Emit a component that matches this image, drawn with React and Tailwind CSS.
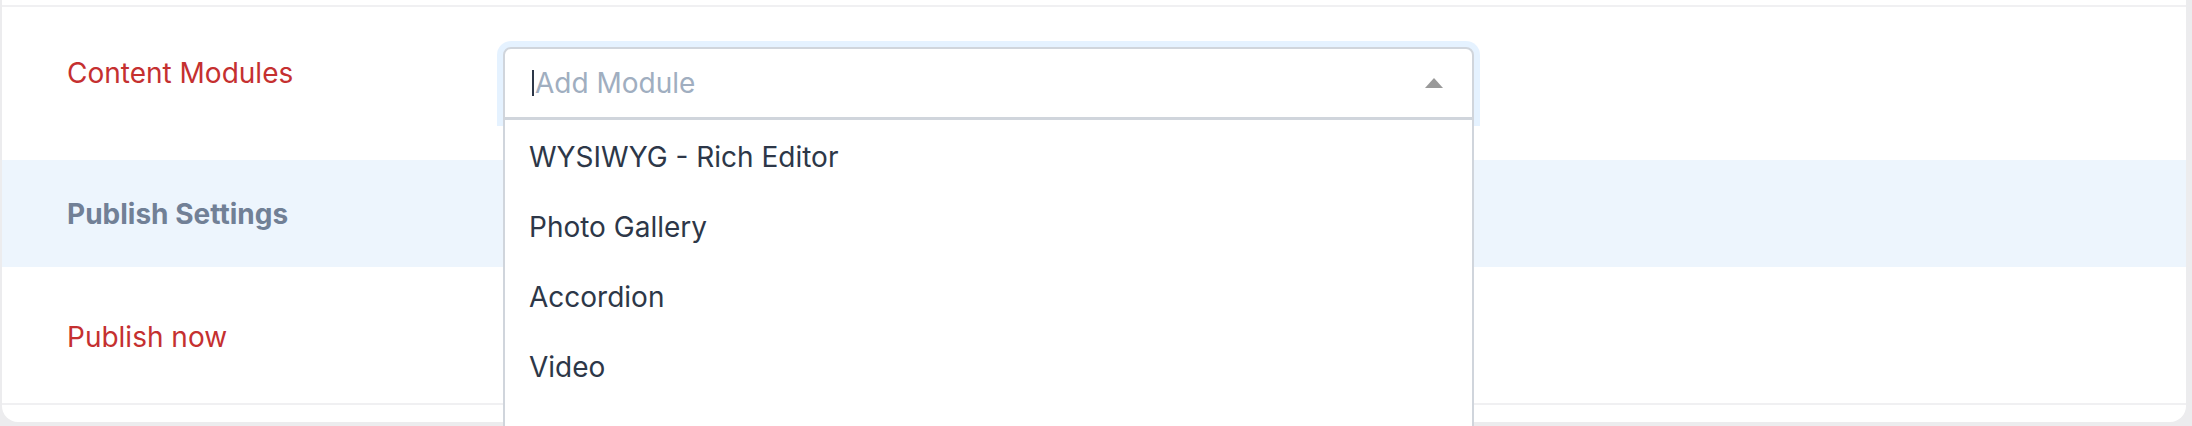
import React from 'react';

const modules = ['WYSIWYG - Rich Editor', 'Photo Gallery', 'Accordion', 'Video', 'Content Block'];

const ModuleSelect = () => (
    <div className="relative w-[971px]">
        <div className="h-[73px] flex items-center justify-between bg-white border-2 border-b-[3px] border-[#d0d5dc] rounded-t-[8px] shadow-[0_0_0_6px_rgba(0,126,255,0.1)] pl-[27px] pr-[29px]">
            <div className="flex items-center">
                <span className="w-[2px] h-[26px] bg-[#2d3748] mr-[1px]" />
                <span className="text-[28px] leading-[42px] text-[#a0aec0]">Add Module</span>
            </div>
            <span className="w-0 h-0 border-x-[9px] border-x-transparent border-b-[10px] border-b-[#999999]" />
        </div>
        <div className="absolute left-0 right-0 top-full bg-white border-x-2 border-[#d0d5dc] pt-[2px] z-10">
            {modules.map((m) => (
                <div key={m} className="h-[70px] flex items-center pl-[24px] text-[28px] text-[#2d3748]">
                    {m}
                </div>
            ))}
        </div>
    </div>
);

export default function App() {
    return (
        <div className="h-[426px] overflow-hidden bg-[#ececee] pl-[2px] pr-[6px] pb-[4px] font-['Inter','Liberation_Sans',Arial,sans-serif]">
            <div className="bg-white rounded-b-[16px] h-full flex flex-col">
                <div className="h-[5px]" />
                <div className="border-t-2 border-[#f0f0f2]" />

                <div className="flex px-[65px] pt-[40px] pb-[40px]">
                    <div className="w-[436px] pt-[5px] text-[28px] leading-[42px] text-[#c53030]">Content Modules</div>
                    <ModuleSelect />
                </div>

                <div className="h-[107px] bg-[#edf5fd] flex items-center px-[65px]">
                    <span className="text-[28px] font-bold text-[#718096]">Publish Settings</span>
                </div>

                <div className="h-[136px] px-[65px] pt-[49px]">
                    <span className="text-[28px] leading-[42px] text-[#c53030]">Publish now</span>
                </div>

                <div className="border-t-2 border-[#f0f0f2]" />
                <div className="h-[17px]" />
            </div>
        </div>
    );
}
